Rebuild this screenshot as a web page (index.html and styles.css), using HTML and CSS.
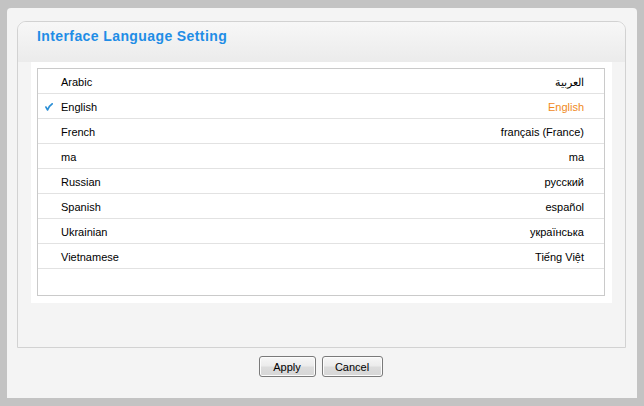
FILE: index.html
```html
<!DOCTYPE html>
<html>
<head>
<meta charset="utf-8">
<link rel="stylesheet" href="styles.css">
</head>
<body>
<div class="panel">
  <div class="box">
    <div class="box-head">Interface Language Setting</div>
    <div class="box-body">
      <div class="list">
        <div class="row"><span class="mark"></span><span class="name">Arabic</span><span class="native" dir="rtl">العربية</span></div>
        <div class="row selected"><span class="mark"><svg width="8" height="8" viewBox="0 0 8 8"><path d="M0.9 4 L2.6 7 Q4.4 2.6 7.3 0.8" fill="none" stroke="#2b8fd6" stroke-width="1.6" stroke-linecap="round" stroke-linejoin="round"/></svg></span><span class="name">English</span><span class="native">English</span></div>
        <div class="row"><span class="mark"></span><span class="name">French</span><span class="native">français (France)</span></div>
        <div class="row"><span class="mark"></span><span class="name">ma</span><span class="native">ma</span></div>
        <div class="row"><span class="mark"></span><span class="name">Russian</span><span class="native">русский</span></div>
        <div class="row"><span class="mark"></span><span class="name">Spanish</span><span class="native">español</span></div>
        <div class="row"><span class="mark"></span><span class="name">Ukrainian</span><span class="native">українська</span></div>
        <div class="row"><span class="mark"></span><span class="name">Vietnamese</span><span class="native">Tiếng Việt</span></div>
      </div>
    </div>
  </div>
  <div class="actions">
    <button class="btn btn-apply">Apply</button>
    <button class="btn btn-cancel">Cancel</button>
  </div>
</div>
</body>
</html>
```
FILE: styles.css
```css
html, body {
  margin: 0;
  padding: 0;
}
body {
  background: #c3c3c3;
  padding: 8px 8px 8px 7px;
  width: 644px;
  height: 406px;
  box-sizing: border-box;
  font-family: "Liberation Sans", Arial, sans-serif;
}
.panel {
  width: 630px;
  height: 390px;
  box-sizing: border-box;
  background: #f4f4f4;
  border-radius: 4px 4px 0 0;
  padding: 13px 11px 0 10px;
}
.box {
  height: 327px;
  box-sizing: border-box;
  border: 1px solid #d2d2d2;
  border-radius: 9px 9px 0 0;
  background: #f4f4f4;
}
.box-head {
  height: 40px;
  box-sizing: border-box;
  padding: 5px 0 0 19px;
  border-radius: 8px 8px 0 0;
  background: linear-gradient(#f7f7f7, #ebebeb);
  color: #1f8de6;
  font-weight: bold;
  font-size: 14px;
  letter-spacing: 0.4px;
  line-height: 18px;
}
.box-body {
  margin: 0 13px 0 13px;
  background: #fff;
  padding: 6px 7px 7px 6px;
}
.list {
  height: 228px;
  box-sizing: border-box;
  border: 1px solid #cacaca;
}
.row {
  display: flex;
  align-items: center;
  height: 25px;
  box-sizing: border-box;
  border-bottom: 1px solid #e2e2e2;
  padding: 2px 20px 0 0;
  font-size: 11px;
  line-height: 14px;
  color: #000;
}
.mark {
  width: 23px;
  height: 14px;
  display: flex;
  align-items: center;
  padding-left: 7px;
  box-sizing: border-box;
}
.mark svg { display: block; }
.name { flex: 1; }
.native { text-align: right; }
.selected .native { color: #f0891c; }
.actions {
  display: flex;
  justify-content: center;
  gap: 6px;
  padding-top: 8px;
  padding-right: 2px;
}
.btn {
  height: 21px;
  box-sizing: border-box;
  border: 1px solid #7a7a7a;
  border-radius: 3px;
  background: linear-gradient(#f7f7f7 0%, #ececec 45%, #dcdcdc 55%, #d6d6d6 100%);
  box-shadow: inset 0 0 0 1px #fcfcfc;
  font-family: "Liberation Sans", Arial, sans-serif;
  font-size: 11px;
  color: #000;
  padding: 1px 0 0 0;
}
.btn-apply { width: 57px; }
.btn-cancel { width: 61px; }
```
